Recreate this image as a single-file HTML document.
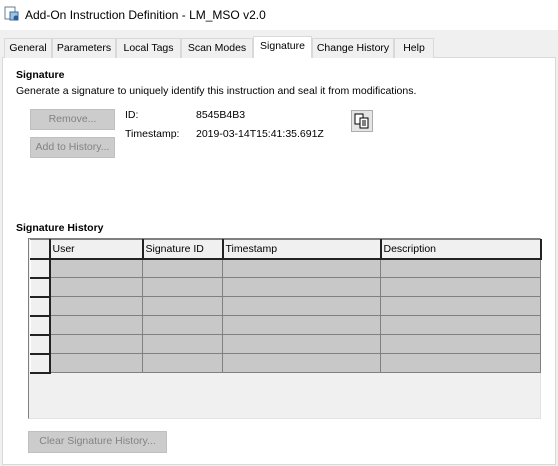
<!DOCTYPE html><html><head><style>
*{box-sizing:border-box;margin:0;padding:0}
body{width:558px;height:466px;background:#f0f0f0;font-family:"Liberation Sans",sans-serif;font-size:10.5px;color:#000;position:relative;overflow:hidden}
.a{position:absolute;white-space:nowrap}
.tab{position:absolute;top:38px;height:20px;border:1px solid #d9d9d9;border-bottom:none;background:#f0f0f0;text-align:center;line-height:18px;white-space:nowrap}
.btn{position:absolute;background:#cccccc;border:1px solid #bfbfbf;color:#838383;text-align:center;line-height:19px;white-space:nowrap}
table{border-collapse:collapse;position:absolute;left:30px;top:239px;table-layout:fixed}
td{border:1px solid #808080;height:19px;background:#c8c8c8;padding:0 2px}
th{font-weight:normal;text-align:left;height:19px;background:#f0f0f0;border:1px solid #808080;border-right:2px solid #222;border-bottom:2px solid #222;padding:0 2px;border-left:1px solid #fff;white-space:nowrap}
td.h{background:#f0f0f0;border-right:2px solid #222;border-bottom:2px solid #222;border-left:1px solid #fff}
</style></head><body>
<div class="a" style="left:0;top:0;width:558px;height:30px;background:#fff"></div>
<svg class="a" style="left:4px;top:6px" width="16" height="16"><rect x="1" y="1" width="10" height="12" fill="#fff" stroke="#6a7c8a"/><rect x="6" y="6" width="8" height="8" fill="#9cc3e0" stroke="#3a6b9a"/><circle cx="12" cy="12" r="2.5" fill="#2b5d9a"/></svg>
<div class="a" style="left:25px;top:8px;font-size:12px">Add-On Instruction Definition - LM_MSO v2.0</div>
<div class="a" style="left:2px;top:57px;width:554px;height:408px;background:#fff;border:1px solid #d9d9d9"></div>
<div class="tab" style="left:4px;width:48px">General</div>
<div class="tab" style="left:52px;width:64px">Parameters</div>
<div class="tab" style="left:116px;width:65px">Local Tags</div>
<div class="tab" style="left:181px;width:72px">Scan Modes</div>
<div class="tab" style="left:253px;width:59px;top:36px;height:22px;background:#fff;line-height:18px">Signature</div>
<div class="tab" style="left:312px;width:82px">Change History</div>
<div class="tab" style="left:394px;width:40px">Help</div>
<div class="a" style="left:16px;top:69px;font-weight:bold">Signature</div>
<div class="a" style="left:16px;top:85px">Generate a signature to uniquely identify this instruction and seal it from modifications.</div>
<div class="btn" style="left:30px;top:109px;width:85px;height:21px">Remove...</div>
<div class="btn" style="left:30px;top:137px;width:85px;height:21px">Add to History...</div>
<div class="a" style="left:125px;top:109px">ID:</div>
<div class="a" style="left:196px;top:109px">8545B4B3</div>
<div class="a" style="left:125px;top:128px">Timestamp:</div>
<div class="a" style="left:196px;top:128px">2019-03-14T15:41:35.691Z</div>
<div class="a" style="left:351px;top:110px;width:22px;height:22px;background:#e5e5e5;border:1px solid #adadad"></div>
<svg class="a" style="left:354px;top:113px" width="16" height="16"><rect x="1" y="1" width="8" height="10" fill="#fff" stroke="#000"/><rect x="6" y="5" width="8" height="10" fill="#fff" stroke="#000"/><path d="M8 8h4M8 10h4M8 12h4" stroke="#000"/></svg>
<div class="a" style="left:16px;top:222px;font-weight:bold">Signature History</div>
<div class="a" style="left:28px;top:238px;width:513px;height:181px;background:#f0f0f0;border:1px solid #808080;border-right-color:#e3e3e3;border-bottom-color:#e3e3e3"></div>
<table>
<tr><th style="width:19px"></th><th style="width:93px">User</th><th style="width:80px">Signature ID</th><th style="width:158px">Timestamp</th><th style="width:160px">Description</th></tr>
<tr><td class="h"></td><td></td><td></td><td></td><td></td></tr>
<tr><td class="h"></td><td></td><td></td><td></td><td></td></tr>
<tr><td class="h"></td><td></td><td></td><td></td><td></td></tr>
<tr><td class="h"></td><td></td><td></td><td></td><td></td></tr>
<tr><td class="h"></td><td></td><td></td><td></td><td></td></tr>
<tr><td class="h"></td><td></td><td></td><td></td><td></td></tr>
</table>
<div class="btn" style="left:28px;top:431px;width:139px;height:22px">Clear Signature History...</div>
</body></html>
